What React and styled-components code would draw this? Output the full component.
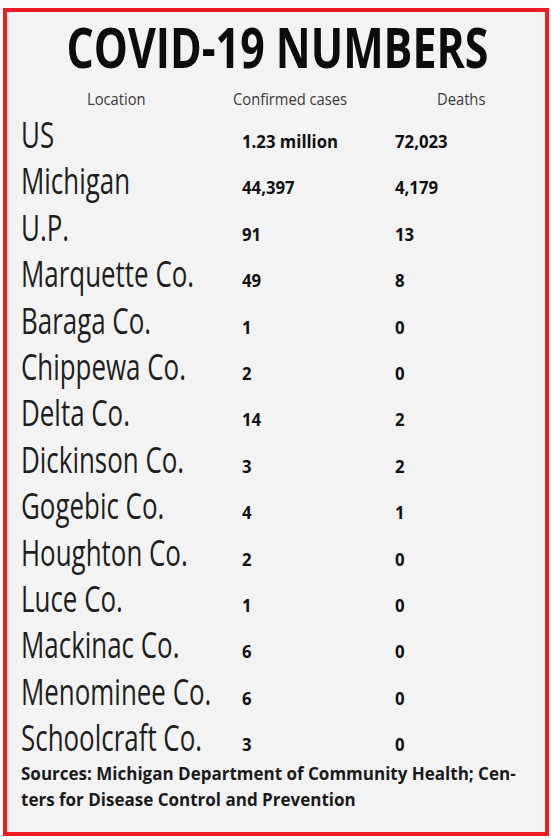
import React from 'react';
import styled, { createGlobalStyle } from 'styled-components';

const GlobalStyle = createGlobalStyle`
  html, body {
    margin: 0;
    padding: 0;
    background: #fbfbfb;
  }
  body {
    font-family: "Open Sans", "Liberation Sans", sans-serif;
  }
`;

const Frame = styled.div`
  box-sizing: border-box;
  width: 546px;
  height: 828px;
  margin: 8px 0 0 3px;
  border: 4px solid #ec1c24;
  background: #f3f3f3;
  padding: 0 0 0 14px;
`;

const Title = styled.h1`
  margin: 7px 0 0 -14px;
  height: 55px;
  font-size: 55px;
  line-height: 55px;
  font-weight: 700;
  color: #0c0c0c;
  text-align: center;
  white-space: nowrap;

  span {
    display: inline-block;
    transform: scaleX(0.78);
    transform-origin: center;
  }
`;

const HeaderRow = styled.div`
  display: grid;
  grid-template-columns: 146px 204px 1fr;
  margin-top: 15px;
  padding-left: 66px;
  height: 20px;
  font-size: 16px;
  line-height: 20px;
  color: #3a3a3a;
`;

const Narrow = styled.span`
  display: inline-block;
  white-space: nowrap;
  transform: scaleX(${p => p.$scale});
  transform-origin: left center;
`;

const Table = styled.div`
  margin-top: 3px;
  display: grid;
  grid-template-columns: 221px 153px 1fr;
  grid-auto-rows: 46.4px;
  align-items: baseline;
`;

const Place = styled.div`
  font-size: 36px;
  line-height: 46px;
  color: #1e1e1e;
`;

const Value = styled.div`
  font-size: 18px;
  font-weight: 700;
  color: #111;
`;

const Sources = styled.p`
  margin: 0;
  font-size: 17px;
  line-height: 26px;
  font-weight: 700;
  color: #1a1a1a;
  white-space: nowrap;
`;

const rows = [
  ['US', '1.23 million', '72,023'],
  ['Michigan', '44,397', '4,179'],
  ['U.P.', '91', '13'],
  ['Marquette Co.', '49', '8'],
  ['Baraga Co.', '1', '0'],
  ['Chippewa Co.', '2', '0'],
  ['Delta Co.', '14', '2'],
  ['Dickinson Co.', '3', '2'],
  ['Gogebic Co.', '4', '1'],
  ['Houghton Co.', '2', '0'],
  ['Luce Co.', '1', '0'],
  ['Mackinac Co.', '6', '0'],
  ['Menominee Co.', '6', '0'],
  ['Schoolcraft Co.', '3', '0'],
];

export default function App() {
  return (
    <>
      <GlobalStyle />
      <Frame>
        <Title><span>COVID-19 NUMBERS</span></Title>
        <HeaderRow>
          <Narrow $scale={0.92}>Location</Narrow>
          <Narrow $scale={0.92}>Confirmed cases</Narrow>
          <Narrow $scale={0.92}>Deaths</Narrow>
        </HeaderRow>
        <Table>
          {rows.map(([place, cases, deaths]) => (
            <React.Fragment key={place}>
              <Place><Narrow $scale={0.72}>{place}</Narrow></Place>
              <Value><Narrow $scale={0.93}>{cases}</Narrow></Value>
              <Value><Narrow $scale={0.93}>{deaths}</Narrow></Value>
            </React.Fragment>
          ))}
        </Table>
        <Sources>
          Sources: Michigan Department of Community Health; Cen-
          <br />
          ters for Disease Control and Prevention
        </Sources>
      </Frame>
    </>
  );
}
